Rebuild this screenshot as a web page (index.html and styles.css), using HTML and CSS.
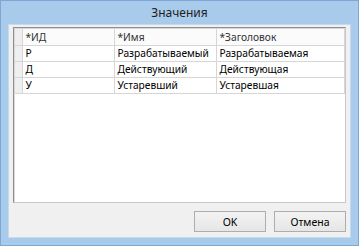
FILE: index.html
```html
<!DOCTYPE html>
<html lang="ru">
<head>
    <meta charset="UTF-8">
    <title>Значения</title>
    <link rel="stylesheet" href="styles.css">
</head>
<body>
    <div class="window">
        <div class="titlebar">Значения</div>
        <div class="client">
            <div class="grid">
                <table>
                    <colgroup>
                        <col class="w0">
                        <col class="w1">
                        <col class="w2">
                        <col>
                    </colgroup>
                    <thead>
                        <tr>
                            <th class="rowhead"></th>
                            <th>*ИД</th>
                            <th>*Имя</th>
                            <th>*Заголовок</th>
                        </tr>
                    </thead>
                    <tbody>
                        <tr><td class="rowhead"></td><td>Р</td><td>Разрабатываемый</td><td>Разрабатываемая</td></tr>
                        <tr><td class="rowhead"></td><td>Д</td><td>Действующий</td><td>Действующая</td></tr>
                        <tr><td class="rowhead"></td><td>У</td><td>Устаревший</td><td>Устаревшая</td></tr>
                    </tbody>
                </table>
            </div>
            <div class="buttons">
                <button class="btn">OK</button>
                <button class="btn">Отмена</button>
            </div>
        </div>
    </div>
</body>
</html>
```

FILE: styles.css
```css
* { margin: 0; padding: 0; box-sizing: border-box; }
body { width: 359px; height: 246px; font-family: "Noto Sans", "Open Sans", sans-serif; }
.window {
    width: 359px; height: 246px; background: #a9cbeb; border: 1px solid #7ea7d6;
    display: flex; flex-direction: column;
}
.titlebar {
    height: 23px; text-align: center; font-size: 12px; line-height: 23px; color: #1e1e1e;
}
.client {
    flex: 1; margin: 0 7px 7px 7px; background: #f0f0f0; border: 1px solid #c6daee;
    display: flex; flex-direction: column; padding: 2px 4px 0 4px;
}
.grid {
    height: 176px; background: #fff; border: 1px solid #8f8f8f; border-right-color: #c8c8c8;
    border-bottom-color: #c8c8c8; box-shadow: inset 1px 1px 0 #d8d8d8;
    padding: 1px 0 0 1px;
}
table { border-collapse: collapse; table-layout: fixed; width: 100%; font-size: 10.2px; color: #000; }
.w0 { width: 7px; }
.w1 { width: 92px; }
.w2 { width: 102px; }
th, td {
    height: 16px; padding: 0 0 0 3px; text-align: left; font-weight: normal;
    border: 1px solid #d6d6d6; white-space: nowrap; overflow: hidden;
}
th { color: #333; background: #fbfbfb; border-top: none; }
.rowhead { padding: 0; background: #efefef; border-left: none; }
.buttons { display: flex; justify-content: flex-end; gap: 8px; margin-top: 8px; }
.btn {
    width: 72px; height: 21px; font-family: inherit; font-size: 10.5px; color: #000;
    background: linear-gradient(#f3f3f3, #e6e6e6); border: 1px solid #adadad;
}
```
